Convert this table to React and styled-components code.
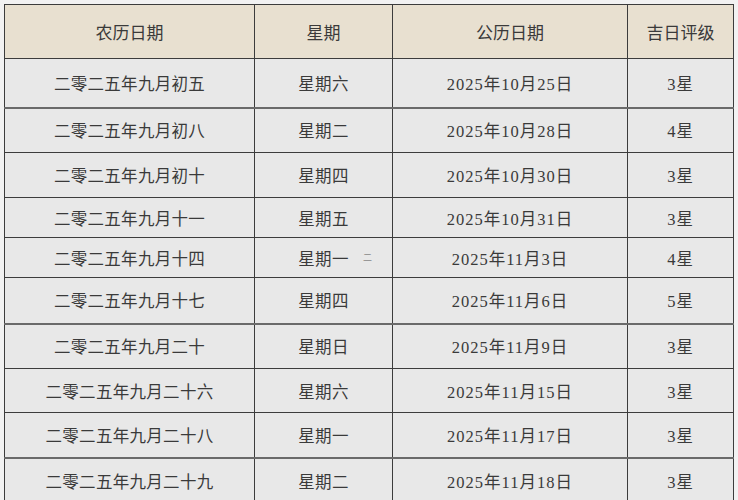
import styled, { createGlobalStyle } from "styled-components";

const GlobalStyle = createGlobalStyle`
  html, body {
    margin: 0;
    padding: 0;
    background: #f2f2f2;
  }
  body {
    font-family: "Liberation Serif", "Noto Sans CJK SC", serif;
  }
`;

const Page = styled.div`
  padding: 4px 0 0 4px;
  height: 500px;
  overflow: hidden;
  box-sizing: border-box;
`;

const Table = styled.table`
  border-collapse: collapse;
  table-layout: fixed;
  width: 729px;
  color: #333;
`;

const HeadCell = styled.th`
  height: 53px;
  padding: 0;
  background: #e8e0d0;
  border: 1px solid #3c3c3c;
  font-weight: normal;
  font-size: 17px;
  text-align: center;
  vertical-align: middle;
  color: #3a3a3a;
`;

const Row = styled.tr`
  height: ${(p) => p.h}px;
  border-top: ${(p) => (p.thick ? "2px solid #6a6a6a" : "1px solid #3c3c3c")};
`;

const Cell = styled.td`
  position: relative;
  padding: 0;
  background: #e8e8e8;
  border-left: 1px solid #3c3c3c;
  border-right: 1px solid #3c3c3c;
  font-size: 16.5px;
  text-align: center;
  vertical-align: middle;
  color: #3a3a3a;
  letter-spacing: ${(p) => (p.wide ? "1px" : "0.3px")};
`;

const Mark = styled.span`
  position: absolute;
  left: 108px;
  top: 50%;
  transform: translateY(-55%);
  font-size: 9px;
  color: #888;
`;

const rows = [
  ["二零二五年九月初五", "星期六", "2025年10月25日", "3星", 49, false],
  ["二零二五年九月初八", "星期二", "2025年10月28日", "4星", 45, true],
  ["二零二五年九月初十", "星期四", "2025年10月30日", "3星", 45, false],
  ["二零二五年九月十一", "星期五", "2025年10月31日", "3星", 40, false],
  ["二零二五年九月十四", "星期一", "2025年11月3日", "4星", 40, false, true],
  ["二零二五年九月十七", "星期四", "2025年11月6日", "5星", 46, false],
  ["二零二五年九月二十", "星期日", "2025年11月9日", "3星", 45, true],
  ["二零二五年九月二十六", "星期六", "2025年11月15日", "3星", 44, false],
  ["二零二五年九月二十八", "星期一", "2025年11月17日", "3星", 45, false],
  ["二零二五年九月二十九", "星期二", "2025年11月18日", "3星", 45, true],
];

export default function App() {
  return (
    <>
      <GlobalStyle />
      <Page>
        <Table>
          <colgroup>
            <col style={{ width: 250 }} />
            <col style={{ width: 138 }} />
            <col style={{ width: 235 }} />
            <col style={{ width: 106 }} />
          </colgroup>
          <thead>
            <tr>
              <HeadCell>农历日期</HeadCell>
              <HeadCell>星期</HeadCell>
              <HeadCell>公历日期</HeadCell>
              <HeadCell>吉日评级</HeadCell>
            </tr>
          </thead>
          <tbody>
            {rows.map(([lunar, week, solar, rate, h, thick, mark]) => (
              <Row key={lunar} h={h} thick={thick}>
                <Cell>{lunar}</Cell>
                <Cell>
                  {week}
                  {mark && <Mark>二</Mark>}
                </Cell>
                <Cell wide>{solar}</Cell>
                <Cell wide>{rate}</Cell>
              </Row>
            ))}
          </tbody>
        </Table>
      </Page>
    </>
  );
}
